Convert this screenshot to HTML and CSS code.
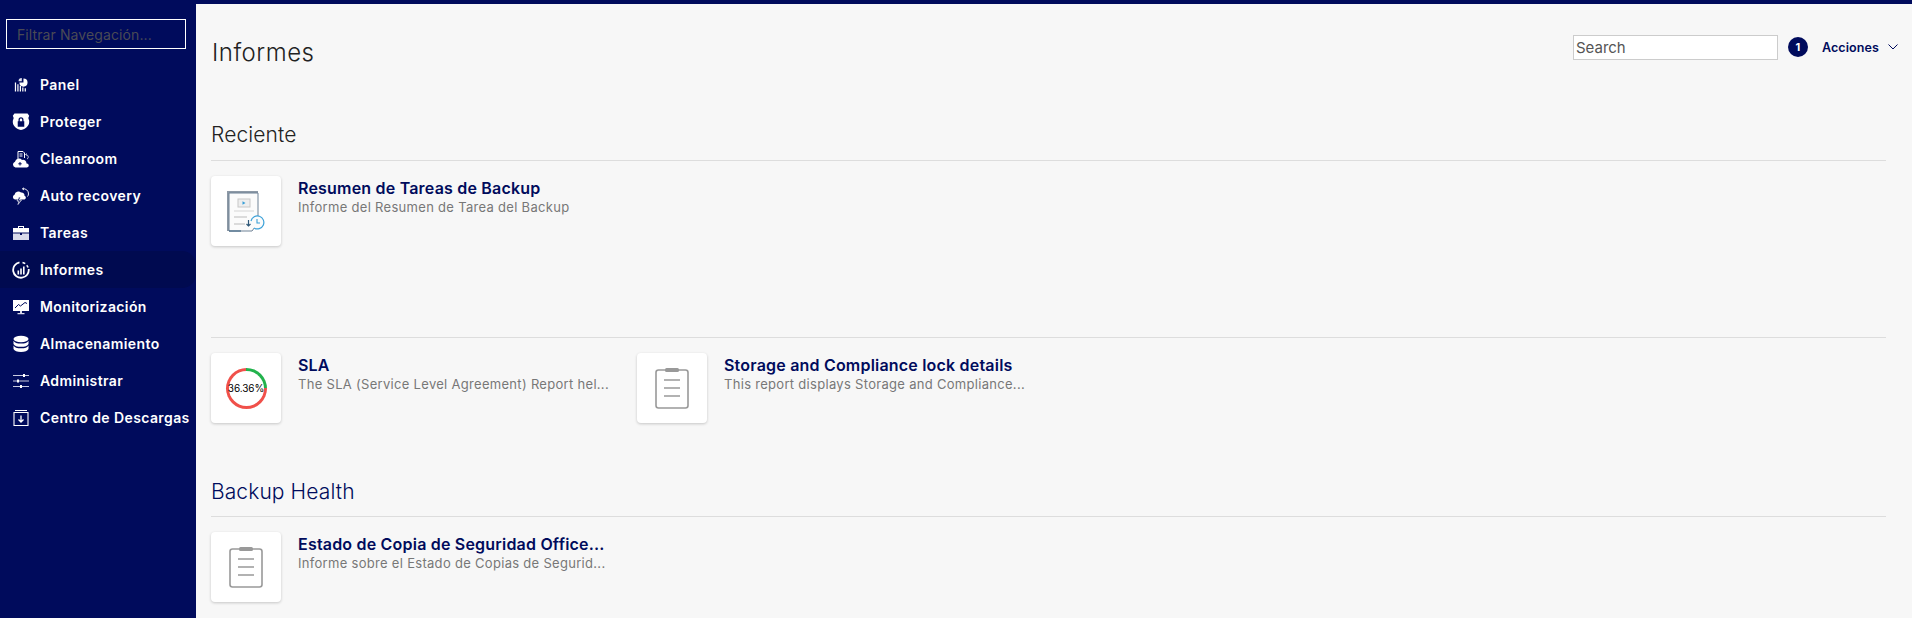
FILE: index.html
```html
<!DOCTYPE html>
<html lang="es">
<head>
  <meta charset="UTF-8" />
  <title>Informes</title>
  <link rel="stylesheet" href="styles.css">
</head>
<body>
  <aside class="sidebar">
    <input class="nav-filter" type="text" placeholder="Filtrar Navegación...">
    <nav class="nav">
      <a class="nav-item">
        <svg class="nav-icon" viewBox="-2 -2 22 22"><path d="M1.500 6h1.500v11H1.500zM4.500 8h1.500v9H4.500zM7.500 10h1.500v7H7.500zM10.500 12h1.500v5h-1.500zM13.500 13h1.500v4h-1.500z" fill="#fff"/><path d="M12 1a5 5 0 1 1-5 5h5z" fill="#fff"/><path d="M6 4.500A4 4 0 0 1 10 .5v4z" fill="#dfe0ee"/></svg>
        Panel
      </a>
      <a class="nav-item">
        <svg class="nav-icon" viewBox="1 1 16 16.500"><path fill-rule="evenodd" d="M3 1.500h12l1.500 2-.8 2 .8 2.500c.5 4-2.500 7.500-7.500 8.500C4 15.500 1 12 1.500 8l.8-2.500-.8-2zM9 4.800A2.300 2.300 0 0 0 6.700 7.100V8.500H6v5h6v-5h-.7V7.100A2.300 2.300 0 0 0 9 4.800zm0 1.200a1.100 1.100 0 0 1 1.100 1.100v1.400H7.900V7.100A1.100 1.100 0 0 1 9 6z" fill="#fff"/></svg>
        Proteger
      </a>
      <a class="nav-item">
        <svg class="nav-icon" viewBox="0 0 18 18"><path d="M6 10V1.500h5l1.500 1.500v5" fill="none" stroke="#fff" stroke-width="1"/><path d="M7.500 4h3M7.500 6h3" stroke="#fff" stroke-width="1"/><path d="M14 4.500c2.500 .5 3 3.500 1 4.500M14.500 3.500l-1 1 1 1" fill="none" stroke="#fff" stroke-width=".8"/><path d="M3.500 17.500a3 3 0 0 1-.5-5.800 4 4 0 0 1 7-1.700 3.500 3.500 0 0 1 4.500 3.500 2 2 0 0 1 .5 4z" fill="#fff"/><path d="M8 12v3.500M6.300 13.800h3.400" stroke="#000b5c" stroke-width="1"/></svg>
        Cleanroom
      </a>
      <a class="nav-item">
        <svg class="nav-icon" viewBox="0 0 18 18"><path d="M3 12.500a2.500 2.500 0 0 1-.5-4.800A4 4 0 0 1 9 5.500a3 3 0 0 1 3.500 3.200 2 2 0 0 1 0 3.800z" fill="#fff"/><path d="M7 10 5 14h2l-1 3.500L9.500 13H7.500l1-3z" fill="#000b5c" stroke="#fff" stroke-width=".7"/><path d="M10.500 1.800a5 5 0 0 1 6 5.200 4 4 0 0 1-1 2.500M10.500 1.800l1.500-1M10.500 1.800l1.500 1.200" fill="none" stroke="#fff" stroke-width=".9"/></svg>
        Auto recovery
      </a>
      <a class="nav-item">
        <svg class="nav-icon" viewBox="0 0 18 18"><path fill-rule="evenodd" d="M6 4V2h6v2h5v4.500H1V4zM7 3v1h4V3z" fill="#fff"/><path d="M1 9.500h7v1.500h2V9.500h7V16H1z" fill="#d9daea"/></svg>
        Tareas
      </a>
      <a class="nav-item is-active">
        <svg class="nav-icon" viewBox="0 0 18 18"><path d="M7.500 1.300A7.800 7.800 0 1 0 16.700 8" fill="none" stroke="#fff" stroke-width="1.800"/><path d="M10.500 1.400a7.800 7.800 0 0 1 2.700 1.300M14.700 4.300a7.500 7.500 0 0 1 1.400 2.200" fill="none" stroke="#fff" stroke-width="1.500"/><path d="M5.500 9.500h1.600v4H5.500zM8.200 7.500h1.600v6H8.200zM11 5.500h1.600v8H11z" fill="#fff"/></svg>
        Informes
      </a>
      <a class="nav-item">
        <svg class="nav-icon" viewBox="0 0 18 18"><path fill-rule="evenodd" d="M1 2h16v11H1z" fill="#fff"/><path d="M3 10l3.500-3.500 2 1.500L13 4.500l2 1" fill="none" stroke="#000b5c" stroke-width="1"/><path d="M8 13h2v2H8zM5.500 15h7v1.200h-7z" fill="#d9daea"/></svg>
        Monitorización
      </a>
      <a class="nav-item">
        <svg class="nav-icon" viewBox="0 0 18 18"><ellipse cx="9" cy="4" rx="7.500" ry="3.200" fill="#fff"/><path d="M1.500 5.700c1 2 3.500 2.800 7.500 2.800s6.500-.8 7.500-2.800V9c-1 2-3.500 2.800-7.500 2.800S2.500 11 1.500 9z" fill="#fff"/><path d="M1.500 10.500c1 2 3.500 2.800 7.500 2.800s6.500-.8 7.500-2.800V14c-1 2-3.500 3-7.500 3s-6.500-1-7.500-3z" fill="#fff"/></svg>
        Almacenamiento
      </a>
      <a class="nav-item">
        <svg class="nav-icon" viewBox="0 0 18 18"><path d="M1 3.500h16M1 9h16M1 14.500h16" stroke="#c9cbe0" stroke-width="1"/><path d="M11 2h2v3h-2zM5 7.500h2v3H5zM8 13h2v3H8z" fill="#fff"/></svg>
        Administrar
      </a>
      <a class="nav-item">
        <svg class="nav-icon" viewBox="0 0 18 18"><path d="M3 1.500h12M2 3.500h14v13H2z" fill="none" stroke="#fff" stroke-width="1.100"/><path d="M9 6.500v6M6.500 10.500 9 13l2.500-2.500" fill="none" stroke="#fff" stroke-width="1.300"/></svg>
        Centro de Descargas
      </a>
    </nav>
  </aside>

  <main class="main">
    <header class="page-head">
      <h1>Informes</h1>
      <div class="head-tools">
        <input class="search" type="text" placeholder="Search">
        <span class="count">1</span>
        <a class="actions">Acciones
          <svg class="chevron" viewBox="0 0 10 6"><path d="M.5 .5 5 5l4.500-4.500" fill="none" stroke="#000b5c" stroke-width="1"/></svg>
        </a>
      </div>
    </header>

    <h2 class="section-title title-recent">Reciente</h2>
    <section class="report-group group-recent">
      <div class="report">
        <div class="report-icon">
          <svg width="40" height="42" viewBox="0 0 40 42">
            <path d="M1 1h31v2H3v38H1z" fill="#8d99a6"/>
            <path d="M3 3h29v30l-6 8H3z" fill="#fbfbfb" stroke="#6f8296" stroke-width="1"/>
            <path d="M3 41h12" stroke="#2f5878" stroke-width="1"/>
            <rect x="12" y="9" width="12" height="8" fill="#eee" stroke="#c8c8c8"/>
            <path d="M16.500 11.300v3.400l3-1.700z" fill="#3aa0d8"/>
            <path d="M8 21h20" stroke="#ddd" stroke-width="1.200"/>
            <path d="M8 27h13M8 34h11" stroke="#bbb" stroke-width="1"/>
            <path d="M25 31a6.500 6.500 0 1 1 3 7" fill="#fbfbfb" stroke="#3aa0d8" stroke-width="1.200"/>
            <path d="M22.500 30v6M20.500 34l2 2 2-2" fill="none" stroke="#2f5878" stroke-width="1.200"/>
            <path d="M31 29v4h3" fill="none" stroke="#3aa0d8" stroke-width="1.100"/>
          </svg>
        </div>
        <div class="report-text">
          <a class="report-name">Resumen de Tareas de Backup</a>
          <p class="report-desc">Informe del Resumen de Tarea del Backup</p>
        </div>
      </div>
    </section>

    <section class="report-group">
      <div class="report">
        <div class="report-icon">
          <div class="gauge"><span>36.36%</span></div>
        </div>
        <div class="report-text">
          <a class="report-name">SLA</a>
          <p class="report-desc">The SLA (Service Level Agreement) Report hel...</p>
        </div>
      </div>
      <div class="report">
        <div class="report-icon">
          <svg class="clipboard" viewBox="0 0 34 42"><use href="#clip"/></svg>
        </div>
        <div class="report-text">
          <a class="report-name">Storage and Compliance lock details</a>
          <p class="report-desc">This report displays Storage and Compliance...</p>
        </div>
      </div>
    </section>

    <h2 class="section-title title-navy">Backup Health</h2>
    <section class="report-group">
      <div class="report">
        <div class="report-icon">
          <svg class="clipboard" viewBox="0 0 34 42"><use href="#clip"/></svg>
        </div>
        <div class="report-text">
          <a class="report-name">Estado de Copia de Seguridad Office...</a>
          <p class="report-desc">Informe sobre el Estado de Copias de Segurid...</p>
        </div>
      </div>
    </section>
  </main>

  <svg class="defs" width="0" height="0">
    <defs>
      <g id="clip">
        <rect x="1" y="3" width="32" height="38" rx="2.500" fill="none" stroke="#999" stroke-width="1.600"/>
        <rect x="10" y="1" width="14" height="4" rx="1.500" fill="#999"/>
        <path d="M9 13h16M9 21h16M9 29h16" stroke="#999" stroke-width="1.400"/>
      </g>
    </defs>
  </svg>
</body>
</html>
```

FILE: styles.css
```css
* {
  box-sizing: border-box;
}
html, body {
  height: 100%;
}
body {
  margin: 0;
  display: flex;
  overflow: hidden;
  background: #f7f7f7;
  border-top: 4px solid #000b5c;
  color: #222;
  font-family: Inter, "Liberation Sans", sans-serif;
}
.sidebar {
  width: 196px;
  flex-shrink: 0;
  background: #000b5c;
  padding-top: 15px;
}
.nav-filter {
  display: block;
  width: 180px;
  height: 30px;
  margin-left: 6px;
  padding: 0 10px;
  background: transparent;
  border: 1px solid #fff;
  border-radius: 0;
  font: 14px Inter, sans-serif;
  letter-spacing: 0.1px;
  color: #fff;
}
.nav-filter::placeholder {
  color: #4a4a55;
}
.nav {
  margin-top: 17px;
}
.nav-item {
  display: flex;
  align-items: center;
  height: 37px;
  padding-left: 12px;
  gap: 10px;
  color: #fff;
  font-size: 14px;
  font-weight: 600;
  letter-spacing: 0.4px;
  white-space: nowrap;
}
.nav-item.is-active {
  background: #000a50;
  border-radius: 0 14px 14px 0;
}
.nav-icon {
  width: 18px;
  height: 18px;
  flex-shrink: 0;
}
.main {
  flex: 1;
  min-width: 0;
  padding: 0 26px 0 15px;
}
.page-head {
  display: flex;
  justify-content: space-between;
  align-items: center;
  height: 56px;
  margin: 20px -12px 0 0;
}
.page-head h1 {
  margin: 0 0 0 1px;
  font-size: 24px;
  font-weight: 300;
  letter-spacing: 0.5px;
  color: #222;
}
.head-tools {
  display: flex;
  align-items: center;
  margin-top: -10px;
}
.search {
  width: 205px;
  height: 25px;
  padding: 0 2px;
  background: #fff;
  border: 1px solid #ccc;
  border-radius: 0;
  font: 15px Inter, sans-serif;
}
.search::placeholder {
  color: #555;
}
.count {
  display: flex;
  align-items: center;
  justify-content: center;
  width: 20px;
  height: 20px;
  margin-left: 10px;
  border-radius: 50%;
  background: #000b5c;
  color: #fff;
  font-size: 11px;
  font-weight: 700;
}
.actions {
  display: flex;
  align-items: center;
  gap: 9px;
  margin-left: 14px;
  color: #000b5c;
  font-size: 12.500px;
  font-weight: 600;
  letter-spacing: 0.1px;
}
.chevron {
  width: 10px;
  height: 6px;
}
.section-title {
  margin: 0;
  font-size: 21px;
  font-weight: 300;
  letter-spacing: 0.1px;
  line-height: 26px;
  color: #222;
}
.title-recent {
  margin-top: 42px;
}
.title-navy {
  color: #000b5c;
  margin-top: 56px;
}
.section-title + .report-group {
  margin-top: 12px;
}
.title-navy + .report-group {
  margin-top: 11px;
}
.report-group {
  display: flex;
  border-top: 1px solid #ddd;
  padding-top: 15px;
}
.group-recent {
  height: 177px;
}
.report {
  display: flex;
  width: 426px;
  gap: 17px;
}
.report-icon {
  display: flex;
  align-items: center;
  justify-content: center;
  width: 70px;
  height: 70px;
  flex-shrink: 0;
  background: #fff;
  border-radius: 4px;
  box-shadow: 0 1px 3px rgba(0, 0, 0, 0.2);
}
.report-text {
  width: 320px;
  min-width: 0;
  padding-top: 2px;
}
.report-name {
  display: block;
  color: #000b5c;
  font-size: 16px;
  font-weight: 600;
  letter-spacing: 0.2px;
  line-height: 20px;
  white-space: nowrap;
}
.report-desc {
  margin: 0;
  color: #777;
  font-size: 13px;
  letter-spacing: 0.3px;
  line-height: 18px;
  white-space: nowrap;
}
.gauge {
  display: flex;
  align-items: center;
  justify-content: center;
  width: 41px;
  height: 41px;
  border-radius: 50%;
  background: conic-gradient(#22b24c 0 25%, #f0504a 25% 100%);
  position: relative;
}
.gauge::before {
  content: "";
  position: absolute;
  inset: 3px;
  border-radius: 50%;
  background: #fff;
}
.gauge span {
  position: relative;
  font-size: 10px;
  letter-spacing: -0.1px;
  color: #000;
  white-space: nowrap;
}
.clipboard {
  width: 34px;
  height: 42px;
}
.defs {
  position: absolute;
}
```
